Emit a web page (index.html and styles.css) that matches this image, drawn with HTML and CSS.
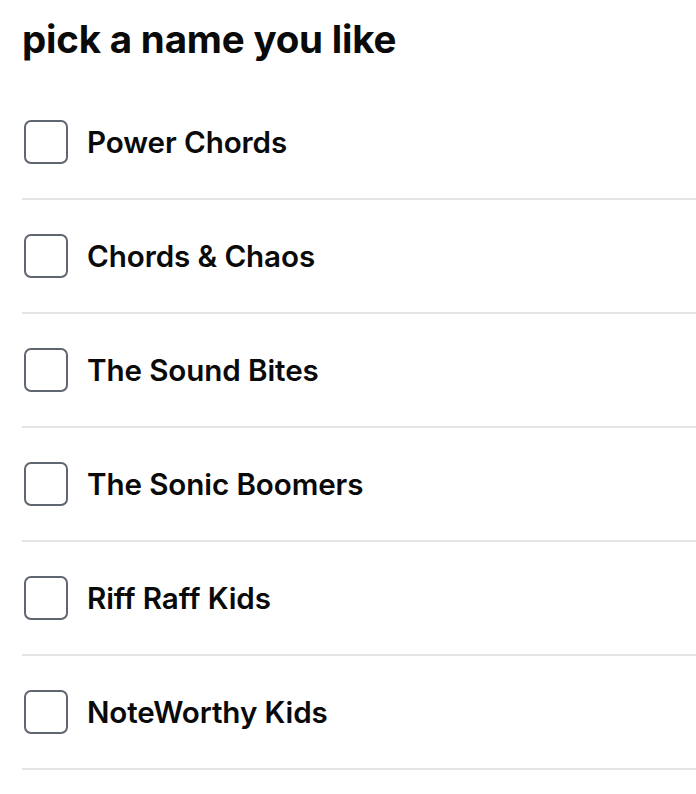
FILE: index.html
```html
<!DOCTYPE html>
<html lang="en">
<head>
    <meta charset="UTF-8">
    <meta name="viewport" content="width=device-width, initial-scale=1.0">
    <title>Band names</title>
    <link rel="stylesheet" href="styles.css">
</head>
<body>
    <h1>pick a name you like</h1>

    <ul class="names">
        <li><label><input type="checkbox"><span class="box"></span>Power Chords</label></li>
        <li><label><input type="checkbox"><span class="box"></span>Chords &amp; Chaos</label></li>
        <li><label><input type="checkbox"><span class="box"></span>The Sound Bites</label></li>
        <li><label><input type="checkbox"><span class="box"></span>The Sonic Boomers</label></li>
        <li><label><input type="checkbox"><span class="box"></span>Riff Raff Kids</label></li>
        <li><label><input type="checkbox"><span class="box"></span>NoteWorthy Kids</label></li>
    </ul>
</body>
</html>
```

FILE: styles.css
```css
:root {
    --text-color: #0a0a0a;
    --box-color: #5f6670;
    --line-color: #e5e5e5;
}

body {
    margin: 0;
    padding: 0 0 0 22px;
    font-family: Inter, "Noto Sans", sans-serif;
    color: var(--text-color);
    background: white;
}

h1 {
    margin: 0;
    padding-top: 12px;
    font-size: 38.5px;
    font-weight: 700;
    line-height: 54px;
    letter-spacing: -0.2px;
}

.names {
    list-style: none;
    margin: 20px 0 0;
    padding: 0;
}

.names li {
    border-bottom: 2px solid var(--line-color);
}

.names label {
    display: flex;
    align-items: center;
    gap: 19px;
    height: 112px;
    font-size: 29.6px;
    font-weight: 600;
    letter-spacing: -0.1px;
    cursor: pointer;
}

.names input {
    display: none;
}

/* custom checkbox square */
.box {
    box-sizing: border-box;
    width: 44px;
    height: 44px;
    margin-left: 2px;
    border: 2.5px solid var(--box-color);
    border-radius: 7px;
}

.names input:checked + .box {
    background: var(--box-color);
}
```
